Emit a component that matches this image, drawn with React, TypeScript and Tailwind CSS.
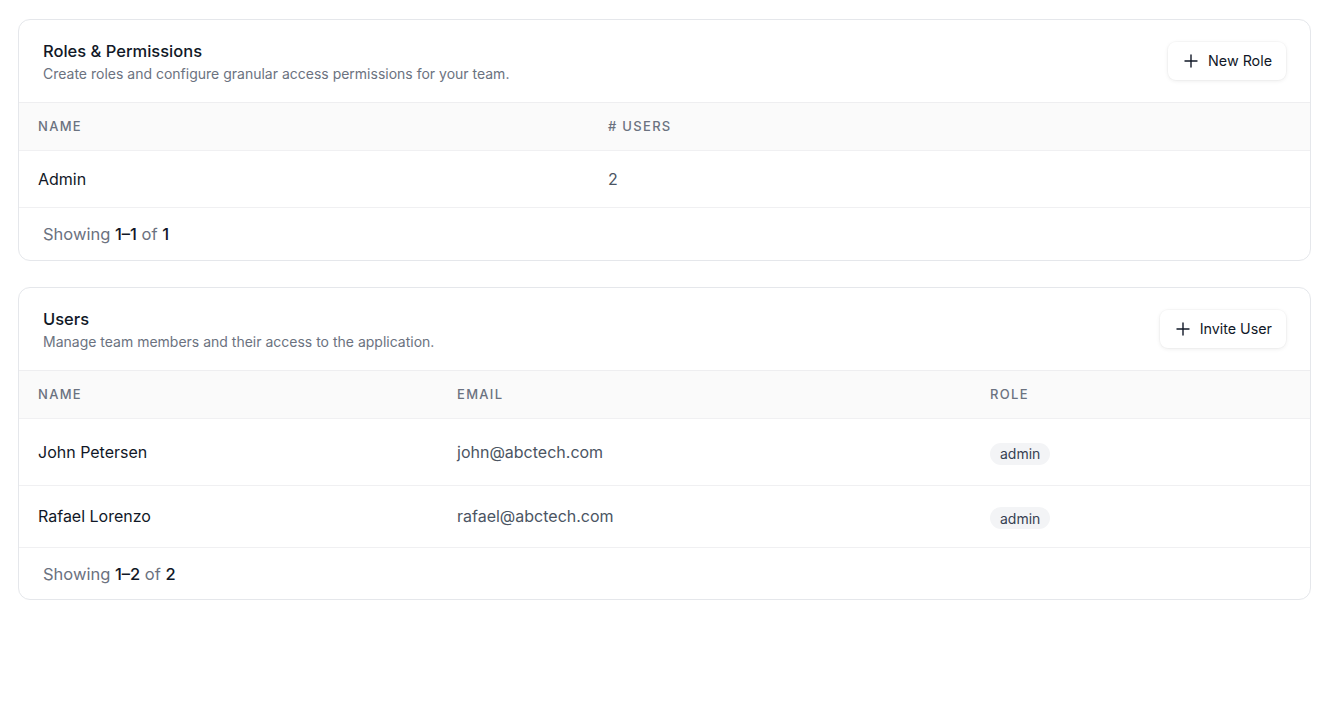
import React from "react";

const font = { fontFamily: "Inter, 'Noto Sans', sans-serif" };

function Plus() {
  return (
    <svg width="14" height="14" viewBox="0 0 14 14" fill="none" stroke="#111827" strokeWidth="1.4" strokeLinecap="round">
      <path d="M7 1v12M1 7h12" />
    </svg>
  );
}

function CardHeader({ title, subtitle, action }: { title: string; subtitle: string; action: string }) {
  return (
    <div className="flex items-start justify-between px-6 h-[83px] border-b border-[#eeeef0]">
      <div className="flex flex-col pt-[21px]">
        <div className="text-[16.5px] leading-5 font-medium text-[#111827]">{title}</div>
        <div className="text-[14px] leading-5 text-[#6b7280] mt-[3px]">{subtitle}</div>
      </div>
      <button className="mt-[22px] flex items-center gap-[10px] h-[38px] pl-[16px] pr-[14px] rounded-lg bg-white shadow-[0_1px_4px_rgba(0,0,0,0.08),0_0_0_1px_rgba(0,0,0,0.02)] text-[14.3px] text-[#111827]">
        <Plus />
        <span>{action}</span>
      </button>
    </div>
  );
}

function Footer({ range, total }: { range: string; total: string }) {
  return (
    <div className="pl-6 flex items-center text-[16.5px] text-[#6b7280]">
      <span>
        Showing <span className="font-medium text-[#111827]">{range}</span> of{" "}
        <span className="font-medium text-[#111827]">{total}</span>
      </span>
    </div>
  );
}

function Badge() {
  return (
    <span className="inline-flex items-center h-[22px] px-[10px] rounded-full bg-[#f3f4f6] text-[14px] text-[#374151]">
      admin
    </span>
  );
}

export default function App() {
  return (
    <div className="min-h-[720px] bg-white pl-[18px] pr-[21px] pt-[19px] flex flex-col gap-[26px]" style={font}>
      <div className="rounded-xl border border-[#e5e7eb] overflow-hidden bg-white">
        <CardHeader
          title="Roles & Permissions"
          subtitle="Create roles and configure granular access permissions for your team."
          action="New Role"
        />
        <div className="grid grid-cols-[570px_1fr] h-[48px] items-center bg-[#fafafa] border-b border-[#f0f0f2] text-[13px] font-medium tracking-[0.1em] text-[#6b7280] uppercase">
          <div className="pl-[19px]">Name</div>
          <div className="pl-[19px]"># Users</div>
        </div>
        <div className="grid grid-cols-[570px_1fr] h-[57px] items-center border-b border-[#f0f0f2] text-[16px]">
          <div className="pl-[19px] text-[#111827]">Admin</div>
          <div className="pl-[19px] text-[#4b5563]">2</div>
        </div>
        <div className="h-[52px] flex">
          <Footer range="1–1" total="1" />
        </div>
      </div>

      <div className="rounded-xl border border-[#e5e7eb] overflow-hidden bg-white">
        <CardHeader
          title="Users"
          subtitle="Manage team members and their access to the application."
          action="Invite User"
        />
        <div className="grid grid-cols-[419px_533px_1fr] h-[48px] items-center bg-[#fafafa] border-b border-[#f0f0f2] text-[13px] font-medium tracking-[0.1em] text-[#6b7280] uppercase">
          <div className="pl-[19px]">Name</div>
          <div className="pl-[19px]">Email</div>
          <div className="pl-[19px]">Role</div>
        </div>
        <div className="grid grid-cols-[419px_533px_1fr] h-[67px] items-center border-b border-[#f0f0f2] text-[16px]">
          <div className="pl-[19px] text-[#111827] -mt-[1px]">John Petersen</div>
          <div className="pl-[19px] text-[#4b5563] -mt-[1px]">john@abctech.com</div>
          <div className="pl-[19px] mt-[2px]"><Badge /></div>
        </div>
        <div className="grid grid-cols-[419px_533px_1fr] h-[62px] items-center border-b border-[#f0f0f2] text-[16px]">
          <div className="pl-[19px] text-[#111827] -mt-[1px]">Rafael Lorenzo</div>
          <div className="pl-[19px] text-[#4b5563] -mt-[1px]">rafael@abctech.com</div>
          <div className="pl-[19px] mt-[2px]"><Badge /></div>
        </div>
        <div className="h-[51px] flex pt-[2px]">
          <Footer range="1–2" total="2" />
        </div>
      </div>
    </div>
  );
}
